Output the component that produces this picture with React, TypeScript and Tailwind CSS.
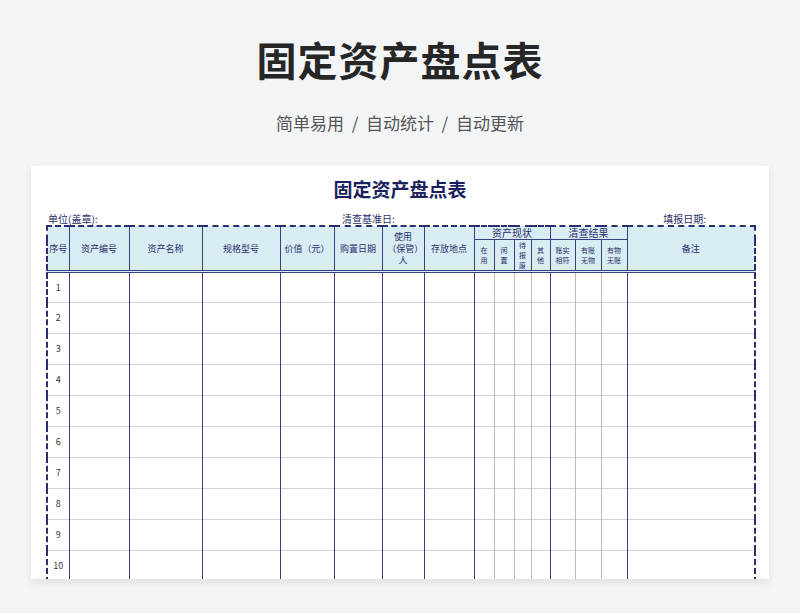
const cols = [22, 60, 73, 78, 54, 48, 42, 50, 20, 20, 17, 19, 25, 26, 26, 128];
const F = { fontFamily: '"Noto Sans CJK SC", "Noto Sans", sans-serif' };

export default function App() {
  const rows = Array.from({ length: 10 }, (_, i) => i + 1);
  const hb = "border-r-[1.5px] border-[#3b3f80] bg-[#d8ecf3] text-[#2a2e6a] font-normal align-middle text-center";
  return (
    <div style={F} className="w-[800px] h-[613px] bg-[#f2f4f6] overflow-hidden flex flex-col items-center">
      <h1 className="mt-[33px] text-[40px] leading-[52px] font-bold text-[#262626] tracking-wide">固定资产盘点表</h1>
      <p className="mt-[25px] text-[17px] leading-[26px] text-[#555]">简单易用&nbsp;&nbsp;/&nbsp;&nbsp;自动统计&nbsp;&nbsp;/&nbsp;&nbsp;自动更新</p>
      <div className="mt-[30px] w-[738px] h-[413px] bg-white shadow-[0_4px_8px_rgba(0,0,0,0.08)] overflow-hidden px-[15px]">
        <div className="text-center text-[19px] font-bold text-[#1b1f5e] mt-[9px] leading-[28px]">固定资产盘点表</div>
        <div className="flex text-[10px] text-[#2a2e6a] mt-[10px] leading-[12px] pl-[2px] pr-[48px]">
          <span className="w-[294px]">单位(盖章):</span>
          <span className="flex-1">清查基准日:</span>
          <span>填报日期:</span>
        </div>
        <table className="table-fixed border-collapse w-[708px] border-2 border-dashed border-[#2b2f6e] text-[9px] leading-[12px]">
          <colgroup>
            {cols.map((w, i) => <col key={i} style={{ width: w }} />)}
          </colgroup>
          <thead className="border-b-[3px] border-double border-[#3b3f80]">
            <tr className="h-[12px]">
              <th rowSpan={2} className={hb}>序号</th>
              <th rowSpan={2} className={hb}>资产编号</th>
              <th rowSpan={2} className={hb}>资产名称</th>
              <th rowSpan={2} className={hb}>规格型号</th>
              <th rowSpan={2} className={hb}>价值（元）</th>
              <th rowSpan={2} className={hb}>购置日期</th>
              <th rowSpan={2} className={hb + " px-[3px]"}>使用（保管）人</th>
              <th rowSpan={2} className={hb}>存放地点</th>
              <th colSpan={4} className={hb + " border-b text-[10px]"}>资产现状</th>
              <th colSpan={3} className={hb + " border-b text-[10px]"}>清查结果</th>
              <th rowSpan={2} className={hb}>备注</th>
            </tr>
            <tr className="h-[31px] text-[7px] leading-[10px]">
              {["在用", "闲置", "待报废", "其他", "账实相符", "有账无物", "有物无账"].map((t, i) => (
                <th key={i} className={hb + " text-[7px] px-[4px]"}>{t}</th>
              ))}
            </tr>
          </thead>
          <tbody>
            {rows.map((r) => (
              <tr key={r} className="h-[31px] border-b border-[#cfd2d8]">
                {cols.map((_, i) => (
                  <td key={i} className={`text-center text-[9px] text-[#333] ${i < 8 || i === 11 || i === 14 ? "border-r-[1.5px] border-[#3b3f80]" : "border-r border-[#b8bcc8]"}`}>
                    {i === 0 ? r : ""}
                  </td>
                ))}
              </tr>
            ))}
          </tbody>
        </table>
      </div>
    </div>
  );
}
